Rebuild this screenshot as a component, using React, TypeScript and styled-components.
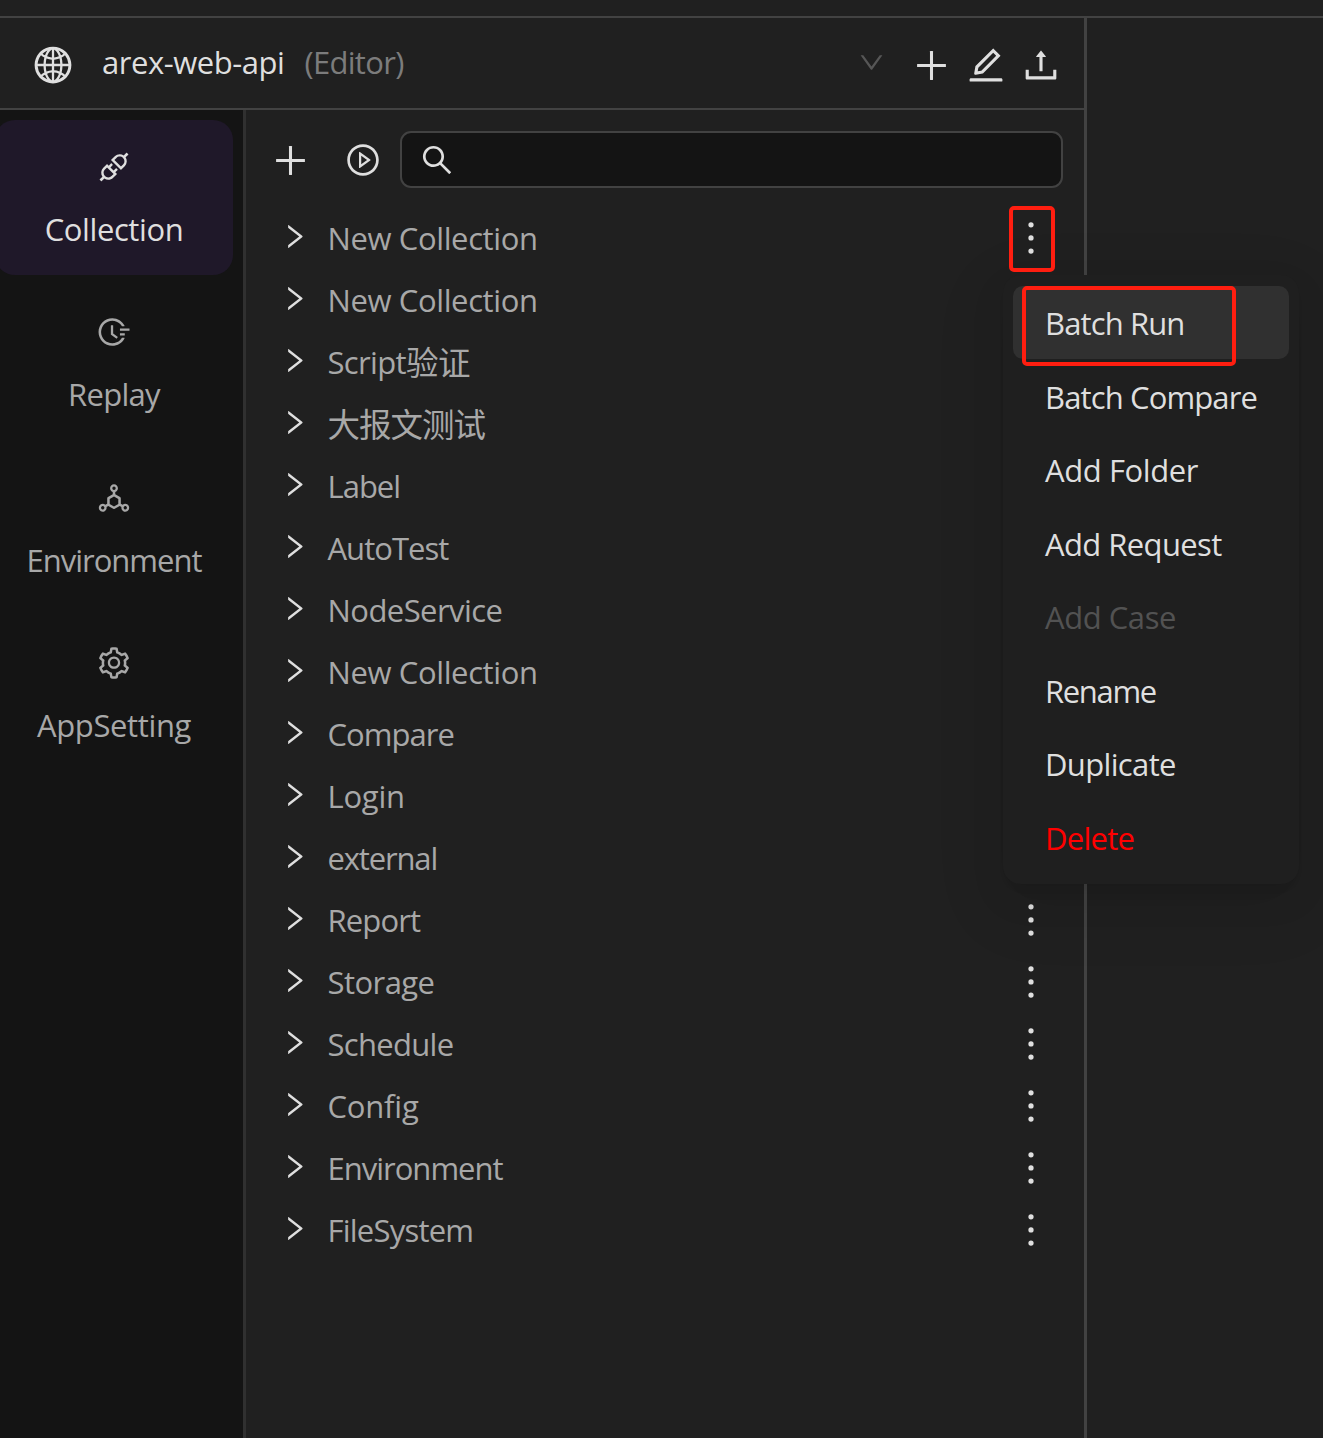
import React from "react";
import styled, { createGlobalStyle } from "styled-components";
import {
  AiOutlineApi,
  AiOutlineDeploymentUnit,
  AiOutlineDown,
  AiOutlineEdit,
  AiOutlineFieldTime,
  AiOutlineGlobal,
  AiOutlineMore,
  AiOutlinePlayCircle,
  AiOutlinePlus,
  AiOutlineRight,
  AiOutlineSearch,
  AiOutlineSetting,
  AiOutlineUpload,
} from "react-icons/ai";

const GlobalStyle = createGlobalStyle`
  *, *::before, *::after { box-sizing: border-box; }
  body {
    margin: 0;
    background: #202020;
    color: #dfdfdf;
    font-family: "Open Sans", "Noto Sans", "Noto Sans CJK SC", sans-serif;
    font-size: 31px;
    line-height: 44px;
  }
  svg { display: block; flex: none; }
`;

const Page = styled.div`
  display: flex;
  flex-direction: column;
  width: 1323px;
  height: 1438px;
  overflow: hidden;
`;

const TopStrip = styled.div`
  flex: none;
  height: 18px;
  border-bottom: 2px solid #424242;
`;

const Body = styled.div`
  flex: 1;
  display: flex;
  min-height: 0;
`;

const LeftPane = styled.section`
  display: flex;
  flex-direction: column;
  width: 1087px;
  border-right: 3px solid #424242;
`;

const Header = styled.header`
  flex: none;
  display: flex;
  align-items: center;
  height: 92px;
  padding: 4px 22px 0 32px;
  border-bottom: 2px solid #424242;
`;

const Workspace = styled.div`
  display: flex;
  align-items: center;
  flex: 1;
`;

const Fit = styled.span<{ $ls?: number; $size?: number }>`
  white-space: nowrap;
  font-size: ${(p) => p.$size ?? 31}px;
  letter-spacing: ${(p) => p.$ls ?? 0}px;
`;

const WorkspaceName = styled.div`
  margin: -6px 0 0 28px;
`;

const Role = styled.div`
  margin: -6px 0 0 20px;
  color: #7c7c7c;
`;

const SelectArrow = styled.div`
  margin: -5px 25px 0 0;
  color: #565656;
`;

const HeaderActions = styled.div`
  display: flex;
  align-items: center;
  gap: 13px;
`;

const Main = styled.div`
  flex: 1;
  display: flex;
  min-height: 0;
`;

const Sidebar = styled.nav`
  display: flex;
  flex-direction: column;
  gap: 10.4px;
  width: 246px;
  padding-top: 10px;
  background: #141414;
  border-right: 3px solid #303030;
`;

const NavItem = styled.div<{ $active?: boolean }>`
  display: flex;
  flex-direction: column;
  align-items: center;
  gap: 22px;
  width: 238px;
  height: 155px;
  margin-left: -5px;
  padding: 29px 0 0 0;
  border-radius: 20px;
  color: ${(p) => (p.$active ? "#dfdfdf" : "#a8a8a8")};
  background: ${(p) => (p.$active ? "#1f1829" : "transparent")};
`;

const Panel = styled.div`
  flex: 1;
  padding: 21px 21px 0 24px;
`;

const Toolbar = styled.div`
  display: flex;
  align-items: center;
  height: 57px;
`;

const ToolIcon = styled.div`
  margin-top: 2px;
`;

const RunAll = styled.div`
  margin: 1px 19px 0 34px;
`;

const SearchBox = styled.div`
  flex: 1;
  display: flex;
  align-items: center;
  height: 57px;
  padding: 0 0 0 17px;
  border: 2px solid #424242;
  border-radius: 11px;
  background: #141414;
`;

const Tree = styled.div`
  padding-top: 20px;
`;

const TreeRow = styled.div`
  display: flex;
  align-items: center;
  height: 62px;
  padding: 0 8.5px 0 8.5px;
`;

const TreeLabel = styled.div`
  flex: 1;
  margin: -2px 0 0 18px;
  color: #a8a8a8;
`;

const CjkText = styled(Fit)`
  position: relative;
  top: 1px;
`;

const RowArrow = styled.div`
  margin-top: -5px;
`;

const RowMenu = styled.div`
  margin-top: -3px;
`;

const Menu = styled.div`
  position: absolute;
  left: 1003px;
  top: 275px;
  width: 296px;
  height: 609px;
  padding: 11px 10px;
  border-radius: 18px;
  background: #1f1f1f;
  box-shadow: 0 14px 36px 0 rgba(0, 0, 0, 0.08), 0 7px 14px -9px rgba(0, 0, 0, 0.12),
    0 20px 63px 18px rgba(0, 0, 0, 0.05);
`;

const MenuItem = styled.div<{ $tone?: "hover" | "disabled" | "danger" }>`
  display: flex;
  align-items: center;
  height: 73px;
  margin-bottom: 0.5px;
  padding: 1px 0 0 32px;
  border-radius: 10px;
  background: ${(p) => (p.$tone === "hover" ? "#303030" : "transparent")};
  color: ${(p) => (p.$tone === "disabled" ? "#525252" : p.$tone === "danger" ? "#ff0000" : "#dfdfdf")};
`;

const Marker = styled.div<{ $x: number; $y: number; $w: number; $h: number }>`
  position: absolute;
  left: ${(p) => p.$x}px;
  top: ${(p) => p.$y}px;
  width: ${(p) => p.$w}px;
  height: ${(p) => p.$h}px;
  border: 4px solid #ff1e10;
  border-radius: 5px;
`;

const nav = [
  { label: "Collection", Icon: AiOutlineApi, active: true, ls: -0.4 },
  { label: "Replay", Icon: AiOutlineFieldTime, ls: -0.7 },
  { label: "Environment", Icon: AiOutlineDeploymentUnit, ls: -1 },
  { label: "AppSetting", Icon: AiOutlineSetting, ls: -0.35 },
];

type Run = { text: string; ls: number; cjk?: boolean };

const collections: Run[][] = [
  [{ text: "New Collection", ls: -0.38 }],
  [{ text: "New Collection", ls: -0.38 }],
  [{ text: "Script", ls: -0.65 }, { text: "验证", ls: -0.5, cjk: true }],
  [{ text: "大报文测试", ls: -1, cjk: true }],
  [{ text: "Label", ls: -1 }],
  [{ text: "AutoTest", ls: -0.98 }],
  [{ text: "NodeService", ls: -0.55 }],
  [{ text: "New Collection", ls: -0.38 }],
  [{ text: "Compare", ls: -0.95 }],
  [{ text: "Login", ls: -0.25 }],
  [{ text: "external", ls: -1.15 }],
  [{ text: "Report", ls: -0.85 }],
  [{ text: "Storage", ls: -0.55 }],
  [{ text: "Schedule", ls: -0.7 }],
  [{ text: "Config", ls: -0.2 }],
  [{ text: "Environment", ls: -1 }],
  [{ text: "FileSystem", ls: -0.78 }],
];

const menu: { label: string; ls: number; tone?: "hover" | "disabled" | "danger" }[] = [
  { label: "Batch Run", ls: -0.88, tone: "hover" },
  { label: "Batch Compare", ls: -0.87 },
  { label: "Add Folder", ls: -0.4 },
  { label: "Add Request", ls: -0.6 },
  { label: "Add Case", ls: -0.45, tone: "disabled" },
  { label: "Rename", ls: -1.35 },
  { label: "Duplicate", ls: -0.65 },
  { label: "Delete", ls: -0.75, tone: "danger" },
];

export default function App() {
  return (
    <>
      <GlobalStyle />
      <Page>
        <TopStrip />
        <Body>
          <LeftPane>
            <Header>
              <Workspace>
                <AiOutlineGlobal size={42} />
                <WorkspaceName>
                  <Fit $ls={-0.45}>arex-web-api</Fit>
                </WorkspaceName>
                <Role>
                  <Fit $ls={-0.7}>(Editor)</Fit>
                </Role>
              </Workspace>
              <SelectArrow>
                <AiOutlineDown size={29} />
              </SelectArrow>
              <HeaderActions>
                <AiOutlinePlus size={41} />
                <AiOutlineEdit size={42} />
                <AiOutlineUpload size={42} />
              </HeaderActions>
            </Header>
            <Main>
              <Sidebar>
                {nav.map(({ label, Icon, active, ls }) => (
                  <NavItem key={label} $active={active}>
                    <Icon size={36} />
                    <Fit $ls={ls}>{label}</Fit>
                  </NavItem>
                ))}
              </Sidebar>
              <Panel>
                <Toolbar>
                  <ToolIcon>
                    <AiOutlinePlus size={41} />
                  </ToolIcon>
                  <RunAll>
                    <AiOutlinePlayCircle size={36} />
                  </RunAll>
                  <SearchBox>
                    <AiOutlineSearch size={36} />
                  </SearchBox>
                </Toolbar>
                <Tree>
                  {collections.map((runs, i) => (
                    <TreeRow key={i}>
                      <RowArrow>
                        <AiOutlineRight size={31} />
                      </RowArrow>
                      <TreeLabel>
                        {runs.map(({ text, ls, cjk }) =>
                          cjk ? (
                            <CjkText key={text} $ls={ls} $size={32.5}>
                              {text}
                            </CjkText>
                          ) : (
                            <Fit key={text} $ls={ls}>
                              {text}
                            </Fit>
                          )
                        )}
                      </TreeLabel>
                      <RowMenu>
                        <AiOutlineMore size={48} />
                      </RowMenu>
                    </TreeRow>
                  ))}
                </Tree>
              </Panel>
            </Main>
          </LeftPane>
        </Body>
        <Menu>
          {menu.map(({ label, tone, ls }) => (
            <MenuItem key={label} $tone={tone}>
              <Fit $ls={ls}>{label}</Fit>
            </MenuItem>
          ))}
        </Menu>
        <Marker $x={1008.5} $y={205.5} $w={46} $h={66} />
        <Marker $x={1021.5} $y={285.5} $w={214} $h={80} />
      </Page>
    </>
  );
}
